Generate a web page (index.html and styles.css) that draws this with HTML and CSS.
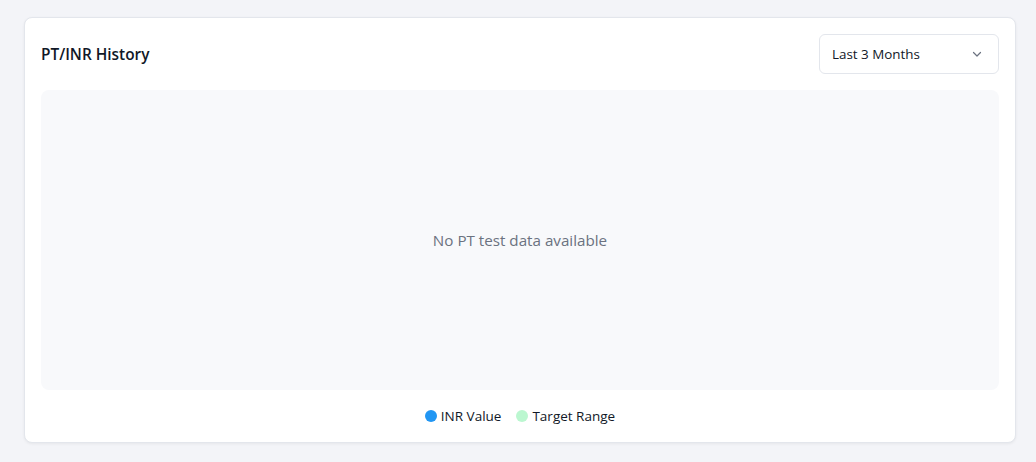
FILE: index.html
```html
<!DOCTYPE html>
<html>
<head>
<meta charset="utf-8">
<link rel="stylesheet" href="styles.css">
</head>
<body>
<div class="page">
  <section class="card">
    <div class="card-header">
      <h2 class="title">PT/INR History</h2>
      <div class="select">
        <span>Last 3 Months</span>
        <svg class="chev" width="12" height="12" viewBox="0 0 12 12"><path d="M2.5 4.5 L6 8 L9.5 4.5" fill="none" stroke="#6b7280" stroke-width="1.2" stroke-linecap="round" stroke-linejoin="round"/></svg>
      </div>
    </div>
    <div class="chart">
      <p class="empty">No PT test data available</p>
    </div>
    <div class="legend">
      <div class="legend-item"><span class="dot dot-blue"></span>INR Value</div>
      <div class="legend-item"><span class="dot dot-green"></span>Target Range</div>
    </div>
  </section>
</div>
</body>
</html>
```
FILE: styles.css
```css
* { box-sizing: border-box; }
html, body { margin: 0; padding: 0; }
body {
  background: #f3f4f8;
  font-family: "Open Sans", "Noto Sans", sans-serif;
  width: 1036px;
  height: 462px;
  overflow: hidden;
}
.page {
  padding: 17px 20px 20px 24px;
}
.card {
  background: #ffffff;
  border: 1px solid #e3e6ec;
  border-radius: 8px;
  box-shadow: 0 1px 3px rgba(0,0,0,0.06);
  padding: 16px;
}
.card-header {
  display: flex;
  align-items: center;
  justify-content: space-between;
  height: 40px;
}
.title {
  margin: 0;
  font-size: 15.4px;
  font-weight: 600;
  color: #111827;
}
.select {
  width: 180px;
  height: 40px;
  border: 1px solid #e3e6ec;
  border-radius: 6px;
  display: flex;
  align-items: center;
  justify-content: space-between;
  padding: 0 15px 0 12px;
  font-size: 13.4px;
  color: #111827;
}
.chev { display: block; }
.chart {
  margin-top: 16px;
  height: 300px;
  background: #f8f9fb;
  border-radius: 8px;
  display: flex;
  align-items: center;
  justify-content: center;
}
.empty {
  margin: 0;
  font-size: 15.2px;
  color: #6b7280;
}
.legend {
  margin-top: 16px;
  height: 20px;
  display: flex;
  justify-content: center;
  align-items: center;
  gap: 15px;
  font-size: 13.5px;
  color: #111827;
}
.legend-item {
  display: flex;
  align-items: center;
  gap: 4px;
}
.dot {
  width: 12px;
  height: 12px;
  border-radius: 50%;
  display: inline-block;
}
.dot-blue { background: #2196f3; }
.dot-green { background: #bbf7d0; }
```
